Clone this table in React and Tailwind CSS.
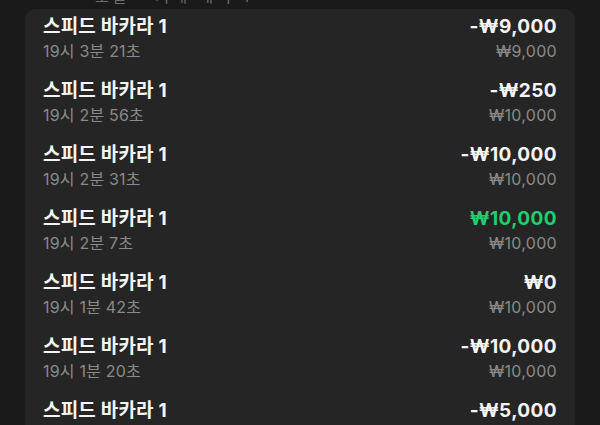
import React from "react";

const rows = [
  { time: "19시 3분 21초", amount: "-₩9,000", bet: "₩9,000" },
  { time: "19시 2분 56초", amount: "-₩250", bet: "₩10,000" },
  { time: "19시 2분 31초", amount: "-₩10,000", bet: "₩10,000" },
  { time: "19시 2분 7초", amount: "₩10,000", bet: "₩10,000", win: true },
  { time: "19시 1분 42초", amount: "₩0", bet: "₩10,000" },
  { time: "19시 1분 20초", amount: "-₩10,000", bet: "₩10,000" },
  { time: "19시 0분 58초", amount: "-₩5,000", bet: "₩5,000" },
];

const font = { fontFamily: '"Inter", "Noto Sans CJK KR", sans-serif' };

export default function App() {
  return (
    <div
      className="w-[600px] h-[425px] overflow-hidden bg-[#1a1a1a] flex flex-col"
      style={font}
    >
      {/* header, only its bottom edge peeks in */}
      <div className="h-[9px] shrink-0 overflow-hidden pl-[95px]">
        <div className="text-[15px] leading-[20px] text-[#6f6f6f] mt-[-13px] tracking-[4px] whitespace-nowrap">
          오늘 · 거래 내역 1
        </div>
      </div>

      <div className="mx-[25px] shrink-0 rounded-t-[10px] bg-[#252525] flex flex-col">
        {rows.map((r, i) => (
          <div key={i} className="h-16 px-[18px] pt-[6px] flex justify-between">
            <div className="flex flex-col">
              <div className="text-[19px] leading-[24px] font-bold text-[#f4f4f4] tracking-[0.2px]">
                스피드 바카라 1
              </div>
              <div className="text-[16px] leading-[22px] mt-px text-[#8a8a8a] tracking-[0.2px]">
                {r.time}
              </div>
            </div>
            <div className="flex flex-col items-end">
              <div
                className={`text-[19px] leading-[24px] font-bold tracking-[0.4px] ${
                  r.win ? "text-[#1fcf6e]" : "text-[#f4f4f4]"
                }`}
              >
                {r.amount}
              </div>
              <div className="text-[16px] leading-[22px] mt-px text-[#8a8a8a] tracking-[0.3px]">
                {r.bet}
              </div>
            </div>
          </div>
        ))}
      </div>
    </div>
  );
}
